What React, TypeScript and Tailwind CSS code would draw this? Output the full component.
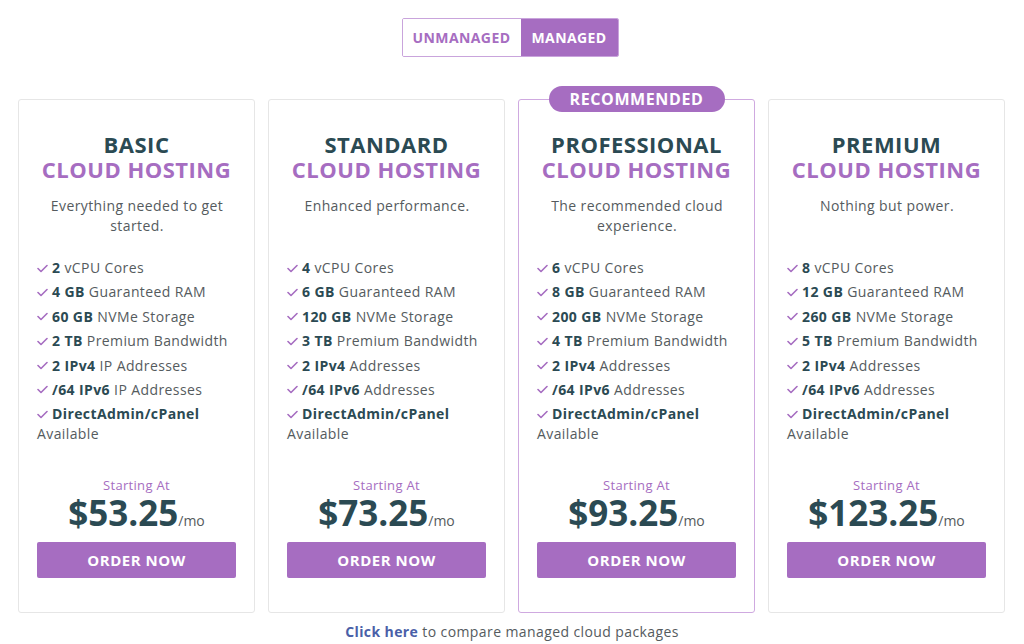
import React from 'react';

interface IPlan {
  name: string;
  desc: string;
  features: [string, string][];
  price: string;
  recommended?: boolean;
}

const plans: IPlan[] = [
  {
    name: 'BASIC',
    desc: 'Everything needed to get started.',
    features: [
      ['2', 'vCPU Cores'],
      ['4 GB', 'Guaranteed RAM'],
      ['60 GB', 'NVMe Storage'],
      ['2 TB', 'Premium Bandwidth'],
      ['2 IPv4', 'IP Addresses'],
      ['/64 IPv6', 'IP Addresses'],
    ],
    price: '$53.25',
  },
  {
    name: 'STANDARD',
    desc: 'Enhanced performance.',
    features: [
      ['4', 'vCPU Cores'],
      ['6 GB', 'Guaranteed RAM'],
      ['120 GB', 'NVMe Storage'],
      ['3 TB', 'Premium Bandwidth'],
      ['2 IPv4', 'Addresses'],
      ['/64 IPv6', 'Addresses'],
    ],
    price: '$73.25',
  },
  {
    name: 'PROFESSIONAL',
    desc: 'The recommended cloud experience.',
    features: [
      ['6', 'vCPU Cores'],
      ['8 GB', 'Guaranteed RAM'],
      ['200 GB', 'NVMe Storage'],
      ['4 TB', 'Premium Bandwidth'],
      ['2 IPv4', 'Addresses'],
      ['/64 IPv6', 'Addresses'],
    ],
    price: '$93.25',
    recommended: true,
  },
  {
    name: 'PREMIUM',
    desc: 'Nothing but power.',
    features: [
      ['8', 'vCPU Cores'],
      ['12 GB', 'Guaranteed RAM'],
      ['260 GB', 'NVMe Storage'],
      ['5 TB', 'Premium Bandwidth'],
      ['2 IPv4', 'Addresses'],
      ['/64 IPv6', 'Addresses'],
    ],
    price: '$123.25',
  },
];

const Check: React.FC = () => (
  <svg width="11" height="9" viewBox="0 0 11 9" className="mr-[4px] shrink-0 inline-block" fill="none">
    <path d="M1 4.5 L4 7.5 L10 1.5" stroke="#a66dc1" strokeWidth="1.6" strokeLinecap="round" strokeLinejoin="round" />
  </svg>
);

const PlanCard: React.FC<{ plan: IPlan }> = ({ plan }) => {
  const border = plan.recommended ? 'border-[#cfa9e0]' : 'border-[#e6e6e6]';
  return (
    <div className={`relative w-[237px] h-[514px] border ${border} rounded-[3px] bg-white flex flex-col px-[18px] pt-[32px] pb-[34px]`}>
      {plan.recommended && (
        <div className="absolute -top-[14px] left-1/2 -translate-x-1/2 w-[176px] h-[26px] rounded-full bg-[#a66dc1] text-white font-bold text-[16px] leading-[26px] text-center tracking-[0.6px]">
          RECOMMENDED
        </div>
      )}
      <h3 className="text-center font-bold text-[22px] leading-[25px] tracking-[0.5px] text-[#2b4a53]">{plan.name}</h3>
      <h4 className="text-center font-bold text-[22px] leading-[25px] tracking-[0.5px] text-[#a66dc1]">CLOUD HOSTING</h4>
      <p className="mt-[14px] mx-auto w-[200px] h-[40px] text-center text-[14px] leading-[20px] tracking-[0.4px] text-[#555b5e]">{plan.desc}</p>
      <ul className="mt-[22px] text-[14px] leading-[20px] tracking-[0.4px] text-[#555b5e]">
        {plan.features.map(([b, t]) => (
          <li key={t + b} className="mb-[4.4px] flex items-center whitespace-nowrap">
            <Check />
            <span className="font-bold text-[#2b4a53]">{b}</span>&nbsp;{t}
          </li>
        ))}
        <li>
          <div className="flex items-center">
            <Check />
            <span className="font-bold text-[#2b4a53]">DirectAdmin/cPanel</span>
          </div>
          <div>Available</div>
        </li>
      </ul>
      <div className="mt-auto flex flex-col items-center">
        <div className="text-[13px] leading-[16px] tracking-[0.3px] text-[#a66dc1]">Starting At</div>
        <div className="flex items-baseline mt-[3px] h-[34px]">
          <span className="font-bold text-[35px] leading-[34px] text-[#2b4a53]">{plan.price}</span>
          <span className="text-[14px] leading-[20px] text-[#555b5e]">/mo</span>
        </div>
        <button className="mt-[12px] w-full h-[36px] rounded-[2px] bg-[#a66dc1] text-white font-bold text-[15px] tracking-[0.5px]">
          ORDER NOW
        </button>
      </div>
    </div>
  );
};

const App: React.FC = () => {
  return (
    <div className="w-full h-[644px] bg-white overflow-hidden" style={{ fontFamily: '"Open Sans", "Liberation Sans", sans-serif' }}>
      <div className="flex justify-center pt-[18px] pr-[4px]">
        <div className="flex h-[39px] border border-[#c9a4dc] rounded-[2px] overflow-hidden">
          <button className="w-[118px] text-[14px] font-bold tracking-[0.4px] text-[#a66dc1] bg-white">UNMANAGED</button>
          <button className="w-[97px] text-[14px] font-bold tracking-[0.4px] text-white bg-[#a66dc1]">MANAGED</button>
        </div>
      </div>
      <div className="mt-[42px] flex gap-[13px] pl-[18px]">
        {plans.map((p) => (
          <PlanCard key={p.name} plan={p} />
        ))}
      </div>
      <div className="mt-[9px] text-center text-[14px] leading-[20px] tracking-[0.4px] text-[#555b5e]">
        <a className="font-bold text-[#4a5fa8]">Click here</a> to compare managed cloud packages
      </div>
    </div>
  );
};

export default App;
